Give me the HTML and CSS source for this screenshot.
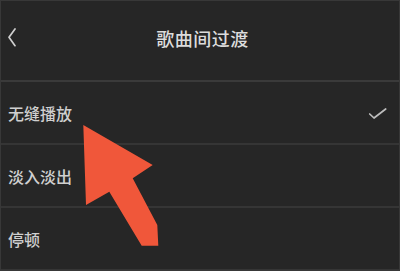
FILE: index.html
```html
<!DOCTYPE html>
<html lang="zh">
<head>
<meta charset="utf-8">
<title>歌曲间过渡</title>
<link rel="stylesheet" href="styles.css">
</head>
<body>
<div class="screen">
  <header class="header">
    <svg class="back" width="10" height="19" viewBox="0 0 10 19"><polyline points="7,1 1,9.3 7,17.7" fill="none" stroke="#cfcfcf" stroke-width="1.7" stroke-linecap="round" stroke-linejoin="round"/></svg>
    <h1 class="title">歌曲间过渡</h1>
    <span></span>
  </header>
  <ul class="list">
    <li class="row"><span class="label">无缝播放</span><svg class="check" width="20" height="14" viewBox="0 0 20 14"><polyline points="1.7,8 6,12 17.7,3" fill="none" stroke="#bdbdbd" stroke-width="1.7" stroke-linecap="round" stroke-linejoin="round"/></svg></li>
    <li class="row"><span class="label">淡入淡出</span></li>
    <li class="row"><span class="label">停顿</span></li>
  </ul>
  <svg class="arrow" width="400" height="271" viewBox="0 0 400 271"><polygon points="83.3,125 152.7,165 132.7,178.3 157.3,225 158.3,245.7 141.7,245.7 109.3,191.7 86,205" fill="#f0573a"/></svg>
</div>
</body>
</html>
```
FILE: styles.css
```css
html, body {
  margin: 0;
  padding: 0;
  background: #262626;
}
.screen {
  position: relative;
  width: 400px;
  height: 271px;
  box-sizing: border-box;
  border: 1px solid #383838;
  background: #262626;
  font-family: "Noto Sans CJK SC", "Noto Sans", sans-serif;
  overflow: hidden;
}
.header {
  height: 81px;
  box-sizing: border-box;
  padding-bottom: 6px;
  border-bottom: 2px solid #3a3a3a;
  display: grid;
  grid-template-columns: 1fr auto 1fr;
  align-items: center;
}
.back {
  margin-left: 7px;
  display: block;
}
.title {
  margin: 0 0 0 5px;
  font-size: 18px;
  font-weight: 500;
  color: #dcdcdc;
  letter-spacing: 0.5px;
}
.list {
  list-style: none;
  margin: 0;
  padding: 0;
}
.row {
  height: 61px;
  border-bottom: 2px solid #353535;
  display: flex;
  align-items: center;
  justify-content: space-between;
  padding: 0 11px 0 7px;
}
.label {
  font-size: 16px;
  color: #cfcfcf;
  font-weight: 500;
}
.check {
  display: block;
}
.arrow {
  position: absolute;
  left: -1px;
  top: -1px;
}
```
